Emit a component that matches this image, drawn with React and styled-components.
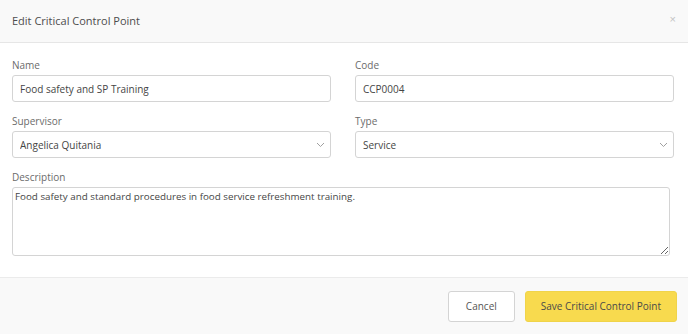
import React from "react"
import styled, { createGlobalStyle } from "styled-components"

const GlobalStyle = createGlobalStyle`
  html, body {
    margin: 0;
    padding: 0;
    background: #ffffff;
    font-family: "Open Sans", "Liberation Sans", Arial, sans-serif;
  }
  * {
    box-sizing: border-box;
  }
`

const Modal = styled.div`
  width: 688px;
  height: 334px;
  display: flex;
  flex-direction: column;
  background: #ffffff;
`

const Header = styled.header`
  height: 43px;
  display: flex;
  align-items: center;
  justify-content: space-between;
  padding: 0 12px 0 12px;
  background: #f9f9f9;
  border-bottom: 1px solid #e6e6e6;
`

const Title = styled.h1`
  margin: 0;
  font-size: 11px;
  font-weight: 400;
  color: #4d4d4d;
  margin-top: -2px;
`

const Close = styled.button`
  border: 0;
  background: none;
  padding: 0;
  color: #c4c4c4;
  font-size: 11px;
  line-height: 1;
  cursor: pointer;
  margin-top: -4px;
`

const Body = styled.div`
  flex: 1;
  padding: 15px 14px 0 12px;
`

const Grid = styled.div`
  display: grid;
  grid-template-columns: 1fr 1fr;
  column-gap: 24px;
  row-gap: 12px;
`

const Field = styled.div`
  display: flex;
  flex-direction: column;
  grid-column: ${(p) => (p.$wide ? "1 / -1" : "auto")};
`

const Label = styled.label`
  font-size: 10px;
  line-height: 15px;
  color: #6b6b6b;
  margin-bottom: 2px;
`

const fieldBase = `
  height: 27px;
  width: 100%;
  border: 1px solid #d4d4d4;
  border-radius: 3px;
  padding: 0 7px;
  font-family: inherit;
  font-size: 10px;
  color: #454545;
  background: #ffffff;
  outline: none;
`

const Input = styled.input`
  ${fieldBase}
`

const SelectWrap = styled.div`
  position: relative;
`

const Select = styled.select`
  ${fieldBase}
  appearance: none;
`

const Chevron = styled.svg`
  position: absolute;
  right: 6px;
  top: 11px;
  pointer-events: none;
`

const TextArea = styled.textarea`
  width: 658px;
  height: 69px;
  border: 1px solid #d4d4d4;
  border-radius: 3px;
  padding: 2px 2px;
  font-family: inherit;
  font-size: 9.8px;
  line-height: 14px;
  color: #454545;
  resize: vertical;
  outline: none;
`

const Footer = styled.footer`
  height: 57px;
  display: flex;
  align-items: center;
  justify-content: flex-end;
  gap: 10px;
  padding: 0 11px 0 0;
  background: #f9f9f9;
  border-top: 1px solid #ebebeb;
`

const Button = styled.button`
  height: 31px;
  padding: 0 ${(p) => (p.$primary ? "15px" : "17px")};
  border-radius: 3px;
  border: 1px solid ${(p) => (p.$primary ? "#f0d44a" : "#d4d4d4")};
  background: ${(p) => (p.$primary ? "#f8da4e" : "#ffffff")};
  color: ${(p) => (p.$primary ? "#4a4a4a" : "#555555")};
  font-family: inherit;
  font-size: 10px;
  cursor: pointer;
`

const Dropdown = ({ value }) => (
  <SelectWrap>
    <Select defaultValue={value}>
      <option>{value}</option>
    </Select>
    <Chevron width="9" height="6" viewBox="0 0 9 6">
      <path d="M1 1l3.5 3.5L8 1" fill="none" stroke="#a0a0a0" strokeWidth="1" />
    </Chevron>
  </SelectWrap>
)

const App = () => (
  <>
    <GlobalStyle />
    <Modal>
      <Header>
        <Title>Edit Critical Control Point</Title>
        <Close aria-label="Close">×</Close>
      </Header>
      <Body>
        <Grid>
          <Field>
            <Label>Name</Label>
            <Input defaultValue="Food safety and SP Training" />
          </Field>
          <Field>
            <Label>Code</Label>
            <Input defaultValue="CCP0004" />
          </Field>
          <Field>
            <Label>Supervisor</Label>
            <Dropdown value="Angelica Quitania" />
          </Field>
          <Field>
            <Label>Type</Label>
            <Dropdown value="Service" />
          </Field>
          <Field $wide>
            <Label>Description</Label>
            <TextArea defaultValue="Food safety and standard procedures in food service refreshment training." />
          </Field>
        </Grid>
      </Body>
      <Footer>
        <Button>Cancel</Button>
        <Button $primary>Save Critical Control Point</Button>
      </Footer>
    </Modal>
  </>
)

export default App
